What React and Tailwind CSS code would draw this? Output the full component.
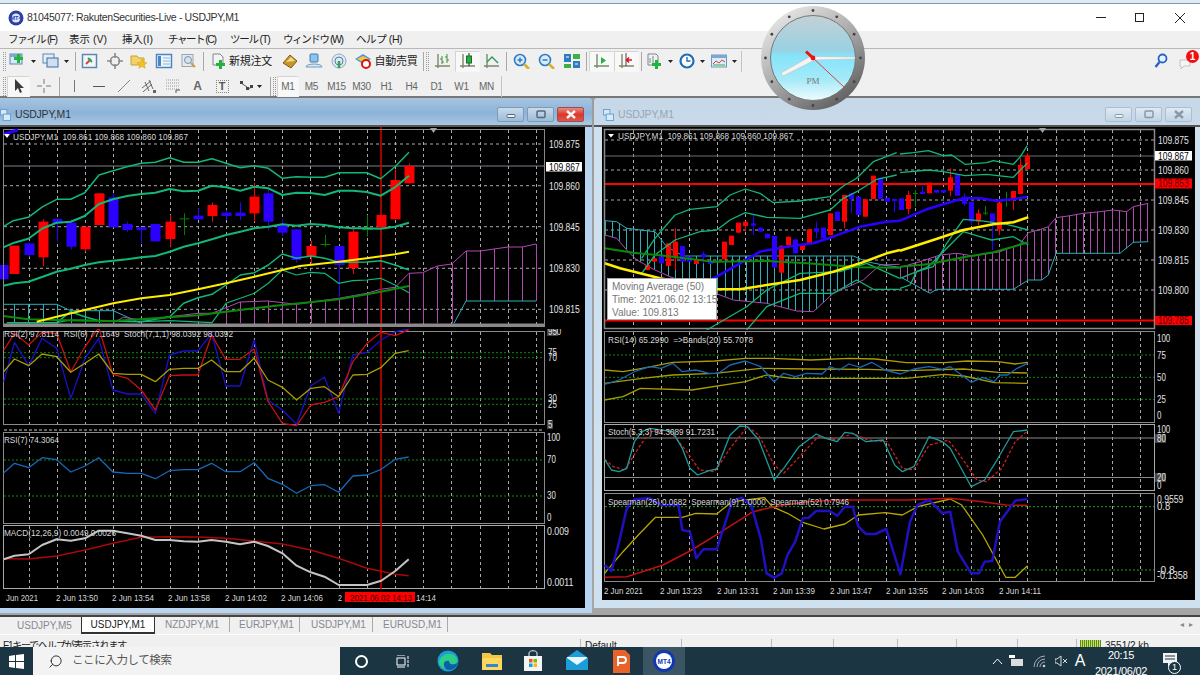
import { Search } from "lucide-react";

const FONT = "font-['Liberation_Sans','Noto_Sans_CJK_JP',sans-serif]";
const axisFont = { fontFamily: "'Liberation Sans', sans-serif", whiteSpace: "pre" };

// zoom-crop coordinates -> screen coordinates
const conv = (ox, oy, sx, sy) => (pts) => pts.map(([x, y]) => `${(ox + x / sx).toFixed(1)},${(oy + y / sy).toFixed(1)}`).join(" ");
const lA = conv(0, 130, 3, 3);
const lS = conv(0, 325, 2.613, 3);
const rA = conv(600, 130, 3, 3);
const rB = conv(900, 130, 3, 3);
const rS = conv(600, 325, 2.613, 3);
// keep 1px verticals on the pixel grid so they stay crisp
const snap = (x) => Math.round(x) + 0.5;

const L = ({ d, c, w = 1.3, dash }) => <polyline points={d} fill="none" stroke={c} strokeWidth={w} strokeDasharray={dash} strokeLinejoin="round" />;
const H = ({ x1, x2, y, c = "#aaa", w = 1, dash = "3 3" }) => <line x1={x1} x2={x2} y1={y} y2={y} stroke={c} strokeWidth={w} strokeDasharray={dash} />;
const T = ({ x, y, c = "#d8d8d8", s = 9.5, len, children }) => (
  <text x={x} y={y} fill={c} fontSize={s} textLength={len} lengthAdjust={len ? "spacingAndGlyphs" : undefined} style={axisFont}>{children}</text>
);
const Tick = ({ x, y, c = "#e4e4e4", t }) => <T x={x} y={y} c={c} s={10} len={t.length * 4.4}>{t}</T>;

function VGrid({ start, end, y1, y2 }) {
  const xs = [];
  for (let x = start; x < end; x += 28.2) xs.push(snap(x));
  return xs.map((x) => <line key={x} x1={x} x2={x} y1={y1} y2={y2} stroke="#a8a8a8" strokeDasharray="3 3" />);
}

function Candle({ x, t, b, w1, w2, c, ox, width }) {
  const fill = c === "r" ? "#ff0000" : c === "b" ? "#2b00ff" : "#008000";
  const cx = snap(ox + x / 3);
  const ty = 130 + t / 3;
  const by = 130 + b / 3;
  return (
    <g>
      <line x1={cx} x2={cx} y1={130 + (w1 ?? t) / 3} y2={130 + (w2 ?? b) / 3} stroke={fill} />
      <rect x={cx - width / 2} y={ty} width={width} height={Math.max(by - ty, 1)} fill={fill} />
    </g>
  );
}

const Slice = ({ box: [x, y, w, h], children }) => (
  <svg className="block shrink-0" width={w} height={h} viewBox={`${x} ${y} ${w} ${h}`}>{children}</svg>
);

const leftCandles = [
  [8,405,448,null,null,"b"],[43,347,432,null,null,"r"],[86,340,375,null,380,"b"],[128,275,382,268,408,"r"],[170,267,280,null,335,"b"],[212,278,350,268,358,"b"],[254,290,358,null,365,"r"],[297,190,285,null,null,"r"],[339,202,292,190,null,"b"],[381,282,300,275,305,"b"],[424,292,300,null,340,"b"],[466,282,334,null,null,"b"],[509,275,327,255,350,"r"],[551,265,268,250,315,"g"],[594,257,268,235,270,"b"],[636,225,258,217,275,"r"],[678,248,258,240,270,"b"],[721,248,258,217,270,"b"],[763,200,250,158,275,"r"],[805,190,275,180,300,"b"],[847,285,308,268,318,"b"],[889,298,390,null,398,"b"],
  [932,348,378,332,400,"r"],[974,342,344,315,350,"g"],[1016,348,405,null,500,"b"],[1058,305,415,298,432,"r"],[1100,297,299,255,320,"g"],[1142,255,292,null,null,"r"],[1185,150,268,118,null,"r"],[1227,108,160,100,null,"r"],
];

const leftLines = {
  bbTop: [[10,290],[40,272],[85,262],[128,230],[170,208],[212,208],[254,188],[297,135],[339,122],[381,110],[424,100],[466,97],[509,83],[551,97],[594,97],[636,86],[678,100],[721,113],[763,107],[805,115],[847,145],[889,140],[932,142],[974,142],[1016,128],[1058,128],[1100,128],[1142,146],[1185,110],[1227,67]],
  bbMid: [[10,352],[43,338],[85,326],[128,295],[170,278],[212,275],[254,258],[297,222],[339,208],[381,198],[424,192],[466,188],[509,177],[551,184],[594,182],[636,167],[678,172],[721,182],[763,170],[805,175],[847,195],[889,188],[932,189],[974,195],[1016,182],[1058,182],[1100,186],[1142,197],[1185,172],[1227,137]],
  bbLow: [[10,467],[43,460],[85,455],[128,440],[170,425],[212,416],[254,405],[297,397],[339,392],[381,388],[424,382],[466,378],[509,365],[551,350],[594,340],[636,328],[678,315],[721,305],[763,295],[805,290],[847,283],[889,287],[932,282],[974,285],[1016,292],[1058,295],[1100,295],[1142,296],[1185,290],[1227,278]],
  g4: [[20,578],[170,578],[212,545],[254,560],[297,572],[424,575],[509,560],[551,520],[594,503],[636,493],[678,465],[721,435],[763,428],[805,405],[847,372],[889,385],[932,378],[974,385],[1016,397],[1058,397],[1100,396],[1142,392],[1185,405],[1227,420]],
  g5: [[30,578],[170,578],[212,570],[254,570],[424,575],[509,572],[636,578],[678,520],[721,505],[763,490],[805,460],[847,420],[889,435],[932,427],[974,430],[1016,460],[1058,452],[1100,450],[1142,445],[1185,465],[1227,488]],
  yellow: [[110,575],[170,560],[254,540],[340,520],[424,505],[509,495],[594,478],[678,460],[763,440],[847,420],[900,408],[1016,395],[1100,385],[1185,373],[1227,365]],
  dark: [[10,558],[85,568],[170,570],[254,572],[340,573],[509,562],[594,556],[678,545],[763,535],[847,525],[900,520],[1016,508],[1142,485],[1227,468]],
  cyan: [[10,523],[170,523],[212,542],[340,542],[390,565],[420,578]],
  purple: [[340,578],[370,562],[424,570],[509,560],[594,550],[636,550],[720,516],[805,513],[889,523],[1016,505],[1100,490],[1142,478],[1185,472],[1227,430],[1268,428],[1312,408],[1355,402],[1398,363],[1440,363],[1482,357],[1524,351],[1566,351],[1608,342]],
  cyanLow: [[1362,580],[1398,513],[1608,513]],
};

const lsRsiBlue = [[10,170],[38,52],[75,122],[110,40],[148,70],[185,220],[222,100],[258,40],[295,195],[333,207],[369,207],[406,265],[443,90],[480,78],[517,78],[553,25],[590,183],[627,183],[664,45],[700,225],[738,255],[775,298],[812,182],[848,157],[885,265],[922,90],[959,82],[996,45],[1033,20],[1068,12]];
const lsRsiRed = [[10,75],[38,25],[75,60],[110,22],[148,25],[185,140],[222,65],[258,8],[295,148],[333,160],[369,195],[406,255],[443,152],[480,150],[517,150],[553,30],[590,103],[627,103],[664,72],[700,228],[738,295],[775,302],[812,240],[848,232],[885,215],[922,110],[959,55],[996,22],[1033,32],[1068,14]];
const lsRsiYellow = [[10,140],[38,102],[75,122],[110,87],[148,95],[185,142],[222,115],[258,87],[295,145],[333,148],[369,148],[406,170],[443,133],[480,130],[517,130],[553,105],[590,140],[627,140],[664,100],[700,165],[738,187],[775,225],[812,190],[848,185],[885,215],[922,150],[959,148],[996,127],[1033,85],[1068,77]];
const lsRsi7 = [[10,443],[38,415],[75,428],[110,398],[148,404],[185,441],[222,423],[258,398],[295,441],[333,445],[369,445],[406,461],[443,437],[480,434],[517,434],[553,415],[590,440],[627,440],[664,413],[700,460],[738,478],[775,505],[812,482],[848,479],[885,502],[922,453],[959,450],[996,433],[1033,403],[1068,396]];
const lsMacd = [[10,703],[38,692],[75,688],[110,660],[148,643],[185,647],[222,640],[258,617],[295,617],[333,625],[369,632],[406,645],[443,645],[480,649],[517,650],[553,645],[590,650],[627,658],[664,650],[700,663],[738,685],[775,722],[812,742],[848,755],[885,780],[922,780],[959,780],[996,767],[1033,738],[1068,703]];
const lsSignal = [[10,701],[75,702],[148,693],[222,675],[295,655],[369,637],[443,635],[517,636],[590,640],[664,648],[738,657],[812,675],[885,700],[959,730],[1033,748],[1068,752]];

const rightCandlesA = [
  [142,405,420,null,null,"r"],[163,385,395,null,null,"r"],[184,380,400,null,null,"b"],[205,340,408,null,null,"r"],[226,335,385,295,420,"r"],[247,348,395,null,null,"b"],[268,380,395,null,null,"b"],[289,390,402,null,null,"r"],[310,372,382,365,400,"b"],[331,395,402,null,null,"b"],[373,335,388,null,null,"r"],[394,317,345,null,null,"r"],[415,278,308,null,null,"r"],[436,275,288,null,305,"r"],[458,280,287,252,315,"b"],[479,293,305,null,null,"b"],[500,311,325,null,null,"b"],[521,318,412,null,null,"b"],[543,347,428,null,null,"r"],[564,320,345,null,null,"r"],[585,328,370,null,null,"b"],[606,342,360,null,null,"r"],[627,298,340,null,null,"r"],[648,295,305,275,325,"b"],[670,293,325,null,null,"b"],[691,250,315,null,null,"r"],[712,245,273,null,null,"b"],[733,195,275,null,295,"r"],[754,190,207,null,250,"b"],[775,200,255,null,null,"b"],[796,208,260,null,null,"r"],[818,137,207,null,null,"r"],[839,143,207,null,null,"b"],[860,203,215,null,null,"b"],[881,207,213,null,247,"b"],
];
const rightCandlesB = [
  [2,205,240,null,null,"b"],[23,195,237,183,252,"r"],[44,189,191,180,230,"g"],[65,185,192,168,null,"b"],[87,158,190,null,null,"r"],[108,180,188,null,null,"b"],[129,180,188,null,null,"b"],[150,142,182,115,198,"r"],[171,133,197,null,null,"b"],[192,200,222,190,228,"b"],[213,215,275,null,285,"b"],[234,250,275,238,285,"r"],[255,248,250,228,255,"g"],[277,250,280,null,360,"b"],[298,218,298,null,315,"r"],[319,210,212,185,230,"g"],[340,183,208,null,240,"r"],[361,105,192,85,null,"r"],[382,77,117,70,null,"r"],
];

const cloudBottomB = [[0,440],[90,490],[110,478],[340,478],[385,450],[425,450],[445,435],[468,370],[660,370],[700,337],[745,335]];
const cloudTopB = [[0,412],[60,395],[120,375],[170,370],[220,378],[300,365],[360,342],[385,308],[425,297],[445,290],[468,263],[510,257],[550,250],[600,245],[640,240],[680,245],[700,230],[745,220]];

const interp = (pts, x) => {
  for (let i = 0; i < pts.length - 1; i++) {
    const [a, b] = [pts[i], pts[i + 1]];
    if (x >= a[0] && x <= b[0]) return a[1] + ((b[1] - a[1]) * (x - a[0])) / (b[0] - a[0]);
  }
  return pts[pts.length - 1][1];
};

function LeftChart() {
  const redLine = (y1, y2) => <line x1="381" x2="381" y1={y1} y2={y2} stroke="#c80000" strokeWidth="1.6" />;
  const purpleBars = [678,721,763,805,847,889,932,974,1016,1058,1100,1142,1185,1227,1268,1312,1355,1398,1440,1482,1524,1566,1608];
  return (
    <div className="flex w-[585px] flex-col bg-black">
      <Slice box={[0, 127, 585, 202]}>
        <VGrid start={28.5} end={544} y1={130} y2={324} />
        {[144, 185.7, 226.7, 268.3, 309.3].map((y) => <H key={y} x1={4} x2={544} y={y} />)}
        <H x1={4} x2={544} y={166} c="#77838f" dash="none" />
        <L d={lA(leftLines.cyan)} c="#2ab0b8" w={1} />
        {[10,43,85,128,170,212,254,297,339].map((x) => {
          const t = interp(leftLines.cyan, x);
          return <line key={x} x1={snap(x / 3)} x2={snap(x / 3)} y1={130 + t / 3} y2="323" stroke="#2ab0b8" />;
        })}
        {purpleBars.map((x) => {
          const t = interp(leftLines.purple, x);
          return <line key={x} x1={snap(x / 3)} x2={snap(x / 3)} y1={130 + t / 3} y2={x >= 1398 ? 301 : 323} stroke="#b048b0" />;
        })}
        <L d={lA(leftLines.purple)} c="#b048b0" w={1} />
        <L d={lA(leftLines.cyanLow)} c="#2ab0b8" w={1} />
        {redLine(127, 329)}
        {leftCandles.map(([x, t, b, w1, w2, c]) => <Candle key={x} x={x} t={t} b={b} w1={w1} w2={w2} c={c} ox={0} width={10} />)}
        <L d={lA(leftLines.g5)} c="#12b676" w={1.2} />
        <L d={lA(leftLines.g4)} c="#12b676" w={1.5} />
        <L d={lA(leftLines.bbTop)} c="#12b676" w={1.5} />
        <L d={lA(leftLines.bbMid)} c="#12b676" w={2} />
        <L d={lA(leftLines.bbLow)} c="#12b676" w={2} />
        <L d={lA(leftLines.dark)} c="#0a8a0a" w={2} />
        <L d={lA(leftLines.yellow)} c="#ffee00" w={2} />
        <rect x="3" y="323.5" width="542" height="3.5" fill="#8a8a8a" />
        <rect x="3.5" y="129.5" width="541" height="197" fill="none" stroke="#888" />
        <polyline points="4,134 18,130" stroke="#2b00ff" strokeWidth="3" fill="none" />
        <polygon points="4,134 10,134 7,138" fill="#fff" />
        <polygon points="430,128 437,128 433.5,133" fill="#9aa4ad" />
        <T x={13} y={140} len={175}>USDJPY,M1  109.861 109.868 109.860 109.867</T>
        {[["109.875", 148], ["109.860", 190], ["109.845", 231], ["109.830", 272], ["109.815", 313]].map(([t, y]) => <Tick key={t} x={549} y={y} t={t} />)}
        <rect x="546" y="162" width="36" height="9.5" fill="#fff" />
        <Tick x={549} y={170.5} c="#000" t="109.867" />
      </Slice>
      <Slice box={[0, 329, 585, 102]}>
        <VGrid start={28.5} end={544} y1={332} y2={424} />
        <rect x="3.5" y="331.5" width="541" height="93" fill="none" stroke="#8a8a8a" />
        {[83, 98, 222, 238].map((Y) => <H key={Y} x1={4} x2={544} y={325 + Y / 3} c="#0a8a0a" dash="2 2" />)}
        {redLine(329, 431)}
        <L d={lS(lsRsiBlue)} c="#1a10c8" />
        <L d={lS(lsRsiRed)} c="#c81010" />
        <L d={lS(lsRsiYellow)} c="#a89c00" />
        <H x1={4} x2={544} y={430} c="#c8c8c8" dash="3 2" />
        <T x={4} y={337} len={229}>RSI(2) 97.8114  RSI(6) 77.1649  Stoch(7,1,1) 98.0392 98.0392</T>
        <rect x="547" y="327" width="11" height="9" fill="#444" />
        <Tick x={548} y={335} t="950" />
        <Tick x={548} y={356} t="75" />
        <Tick x={548} y={361} t="70" />
        <Tick x={548} y={402} t="30" />
        <Tick x={548} y={408} t="25" />
        <rect x="547" y="420" width="6" height="9" fill="#444" />
        <Tick x={548} y={428} t="5" />
      </Slice>
      <Slice box={[0, 431, 585, 93]}>
        <VGrid start={28.5} end={544} y1={433} y2={523} />
        <rect x="3.5" y="432.5" width="541" height="91" fill="none" stroke="#8a8a8a" />
        {[405, 513].map((Y) => <H key={Y} x1={4} x2={544} y={325 + Y / 3} c="#0a8a0a" dash="2 2" />)}
        {redLine(431, 524)}
        <L d={lS(lsRsi7)} c="#1668b8" />
        <T x={4} y={443} len={55}>RSI(7) 74.3064</T>
        <Tick x={547} y={441} t="100" />
        <Tick x={547} y={463} t="70" />
        <Tick x={547} y={499} t="30" />
        <Tick x={547} y={521} t="0" />
      </Slice>
      <Slice box={[0, 524, 585, 65]}>
        <VGrid start={28.5} end={544} y1={526} y2={588} />
        <rect x="3.5" y="525.5" width="541" height="63" fill="none" stroke="#aaa" />
        {redLine(524, 589)}
        <L d={lS(lsSignal)} c="#a80808" w={1.5} />
        <L d={lS(lsMacd)} c="#c4c4c4" w={2} />
        <T x={4} y={536} len={112}>MACD(12,26,9) 0.0049 0.0026</T>
        <Tick x={547} y={535} t="0.009" />
        <Tick x={547} y={586} t="0.0011" />
      </Slice>
      <Slice box={[0, 589, 585, 19]}>
        {[["Jun 2021", 6, 32], ["2 Jun 13:50", 56, 42], ["2 Jun 13:54", 112, 42], ["2 Jun 13:58", 168, 42], ["2 Jun 14:02", 225, 42], ["2 Jun 14:06", 281, 42], ["2", 338, 4], ["14:14", 416, 20]].map(([t, x, len]) => <T key={x} x={x} y={601} len={len}>{t}</T>)}
        <rect x="345" y="592" width="70" height="10" fill="#ff0000" />
        <T x={350} y={601} c="#330000" len={62}>2021.06.02 14:13</T>
      </Slice>
    </div>
  );
}

function RightChart() {
  const barsB = [];
  for (let x = 0; x <= 745; x += 21.15) barsB.push(x);
  const barsA = [];
  for (let x = 14; x <= 780; x += 21.15) barsA.push(x);
  const cloudTop = [[14,272],[50,275],[80,295],[165,305],[200,350],[250,378],[760,378],[800,395],[850,405],[899,412]];
  const cloudBot = [[14,315],[50,325],[80,360],[110,390],[165,420],[210,440],[320,480],[400,510],[500,520],[590,543],[640,545],[700,490],[790,450],[840,405],[899,403]];
  return (
    <div className="relative flex w-[593px] flex-col bg-black">
      <Slice box={[602, 127, 593, 203]}>
        <VGrid start={632.5} end={1154} y1={130} y2={328} />
        {[140, 170, 200, 230, 260, 290].map((y) => <H key={y} x1={605} x2={1154} y={y} />)}
        <H x1={605} x2={1154} y={156} c="#6a6f74" dash="none" />
        <L d={rA(cloudTop)} c="#2ab0b8" w={1} />
        <L d={rA(cloudBot)} c="#b048b0" w={1} />
        {barsA.map((x) => <line key={x} x1={snap(600 + x / 3)} x2={snap(600 + x / 3)} y1={130 + interp(cloudTop, x) / 3} y2={130 + interp(cloudBot, x) / 3} stroke="#2ab0b8" />)}
        {barsB.map((x) => <line key={x} x1={snap(900 + x / 3)} x2={snap(900 + x / 3)} y1={130 + interp(cloudTopB, x) / 3} y2={130 + interp(cloudBottomB, x) / 3} stroke="#b048b0" />)}
        <L d={rB(cloudTopB)} c="#b048b0" w={1} />
        <L d={rB(cloudBottomB)} c="#2ab0b8" w={1} />
        <H x1={605} x2={1154} y={184} c="#ff0000" w={2} dash="none" />
        <H x1={605} x2={1154} y={320.5} c="#ff0000" w={2} dash="none" />
        {rightCandlesA.map(([x, t, b, w1, w2, c]) => <Candle key={x} x={x} t={t} b={b} w1={w1} w2={w2} c={c} ox={600} width={5} />)}
        {rightCandlesB.map(([x, t, b, w1, w2, c]) => <Candle key={x} x={x} t={t} b={b} w1={w1} w2={w2} c={c} ox={900} width={5} />)}
        <L d={rA([[125,385],[165,325],[225,255],[270,238],[350,230],[390,195],[436,177],[480,190],[520,218],[600,213],[690,200],[730,168],[770,145],[820,95],[890,68]])} c="#12b676" />
        <L d={rB([[0,72],[40,68],[85,62],[130,77],[155,75],[195,103],[260,98],[280,92],[340,103],[361,80],[382,47]])} c="#12b676" />
        <L d={rA([[125,430],[165,375],[205,345],[225,330],[300,305],[350,300],[390,270],[436,248],[500,262],[600,265],[690,240],[730,205],[770,185],[830,148],[890,135]])} c="#12b676" />
        <L d={rB([[0,128],[85,120],[130,125],[195,137],[260,133],[340,142],[361,120],[382,100]])} c="#12b676" />
        <L d={rA([[320,600],[440,530],[500,480],[600,430],[720,425],[800,400],[899,445]])} c="#12b676" />
        <L d={rA([[440,600],[500,530],[600,490],[700,490],[770,450],[820,478],[899,478]])} c="#12b676" />
        <L d={rB([[0,475],[30,465],[50,425],[100,410],[140,340],[190,268],[240,272],[320,283],[385,300]])} c="#12b676" />
        <L d={rB([[0,445],[50,425],[85,410],[130,365],[190,305],[240,320],[275,330],[340,320],[385,345]])} c="#12b676" />
        <L d={rA([[330,450],[350,440],[420,400],[480,365],[560,350],[640,340],[700,320],[780,290],[860,275],[900,272]])} c="#2b00ff" w={2.5} />
        <L d={rB([[0,272],[80,238],[140,220],[190,205],[240,205],[290,212],[340,208],[382,200]])} c="#2b00ff" w={2.5} />
        <L d={rA([[14,355],[100,368],[200,378],[340,395],[500,393],[620,400],[780,412],[900,413]])} c="#0a8a0a" w={2} />
        <L d={rB([[0,410],[90,402],[190,382],[280,367],[340,350],[385,337]])} c="#0a8a0a" w={2} />
        <L d={rA([[14,400],[60,415],[120,430],[180,445],[350,478],[420,478],[500,465],[600,450],[700,425],[780,400],[860,370],[900,360]])} c="#ffee00" w={2.5} />
        <L d={rB([[0,362],[100,330],[190,300],[280,283],[340,277],[385,262]])} c="#ffee00" w={2.5} />
        <rect x="604.5" y="129.5" width="550" height="199" fill="none" stroke="#8a8a8a" strokeWidth="1.5" />
        <polygon points="608,134 614,134 611,137.5" fill="#fff" />
        <polygon points="1039,128 1046,128 1042.5,133" fill="#9aa4ad" />
        <T x={618} y={139} len={175}>USDJPY,M1  109.861 109.868 109.860 109.867</T>
        {[["109.875", 144], ["109.860", 174], ["109.845", 204], ["109.830", 234], ["109.815", 264], ["109.800", 294]].map(([t, y]) => <Tick key={t} x={1158} y={y} t={t} />)}
        <rect x="1155" y="151" width="37" height="9.5" fill="#fff" />
        <Tick x={1158} y={159.5} c="#000" t="109.867" />
        <rect x="1155" y="178.5" width="37" height="10" fill="#ff0000" />
        <Tick x={1158} y={187} c="#5a0000" t="109.853" />
        <rect x="1155" y="316" width="37" height="9" fill="#ff0000" />
        <Tick x={1158} y={324} c="#5a0000" t="109.785" />
      </Slice>
      <Slice box={[602, 330, 593, 93]}>
        <VGrid start={632.5} end={1154} y1={332} y2={422} />
        <rect x="604.5" y="331.5" width="550" height="91" fill="none" stroke="#8a8a8a" />
        {[90, 157, 223].map((Y) => <H key={Y} x1={605} x2={1154} y={325 + Y / 3} c="#0a8a0a" dash="2 2" />)}
        <L d={rS([[12,135],[60,140],[110,130],[190,112],[300,108],[380,100],[450,100],[550,105],[650,100],[720,102],[800,113],[900,113],[960,108],[1040,110],[1085,117],[1117,112]])} c="#a89c00" />
        <L d={rS([[12,175],[110,160],[190,150],[300,145],[420,130],[550,132],[700,133],[800,137],[950,132],[1040,142],[1117,144]])} c="#a89c00" />
        <L d={rS([[12,225],[60,215],[105,190],[240,195],[380,170],[435,150],[500,160],[800,160],[900,148],[950,153],[1030,173],[1117,175]])} c="#a89c00" />
        <L d={rS([[12,178],[50,165],[90,140],[130,125],[160,130],[190,115],[215,140],[250,135],[285,145],[310,145],[340,120],[380,108],[420,125],[455,170],[480,145],[510,155],[540,145],[580,147],[600,125],[625,135],[650,117],[680,127],[710,112],[745,135],[785,147],[820,132],[860,125],[895,133],[915,125],[945,150],[970,172],[1000,157],[1030,170],[1045,150],[1065,150],[1090,130],[1117,115]])} c="#1668b8" />
        <T x={608} y={343} len={145}>RSI(14) 65.2990  =&gt;Bands(20) 55.7078</T>
        {[["100", 342], ["75", 359], ["50", 381], ["25", 403], ["0", 419]].map(([t, y]) => <Tick key={t} x={1157} y={y} t={t} />)}
      </Slice>
      <Slice box={[602, 423, 593, 69]}>
        <VGrid start={632.5} end={1154} y1={425} y2={491} />
        <rect x="604.5" y="424.5" width="550" height="66" fill="none" stroke="#aaa" />
        <H x1={605} x2={1154} y={438} c="#8a8a8a" dash="none" />
        <H x1={605} x2={1154} y={477.5} c="#8a8a8a" dash="none" />
        <L d={rS([[12,403],[35,425],[65,435],[100,370],[130,320],[180,315],[220,370],[260,435],[300,440],[340,370],[385,305],[415,330],[455,420],[480,445],[530,385],[570,335],[620,345],[660,325],[700,345],[750,350],[790,430],[820,435],[860,360],[910,345],[940,390],[985,465],[1010,470],[1050,430],[1085,350],[1117,318]])} c="#d02020" dash="3 2" />
        <L d={rS([[12,403],[30,435],[50,440],[70,430],[90,350],[110,320],[130,310],[190,320],[215,370],[235,430],[255,450],[285,437],[305,432],[340,330],[365,303],[385,305],[415,345],[440,420],[455,465],[480,430],[520,365],[565,327],[590,340],[620,350],[640,322],[660,325],[695,350],[740,345],[770,420],[790,440],[820,425],[860,335],[895,350],[915,370],[970,485],[1005,465],[1040,400],[1080,320],[1117,315]])} c="#1f9a9a" />
        <T x={608} y={435} len={107}>Stoch(5,3,3) 94.3089 91.7231</T>
        <Tick x={1157} y={433} t="100" />
        <rect x="1155" y="434" width="11" height="9" fill="#444" />
        <Tick x={1157} y={442} t="80" />
        <rect x="1155" y="473" width="11" height="9" fill="#444" />
        <Tick x={1157} y={481} t="20" />
        <Tick x={1157} y={489} t="0" />
      </Slice>
      <Slice box={[602, 492, 593, 92]}>
        <VGrid start={632.5} end={1154} y1={494} y2={582} />
        <rect x="604.5" y="493.5" width="550" height="88" fill="none" stroke="#8a8a8a" />
        {[545, 735].map((Y) => <H key={Y} x1={605} x2={1154} y={325 + Y / 3} c="#18a018" dash="2 2" />)}
        <L d={rS([[12,745],[60,680],[100,630],[145,577],[215,577],[250,565],[305,567],[345,530],[430,518],[450,545],[490,565],[530,592],[585,612],[640,597],[675,570],[745,563],[790,570],[830,545],[915,522],[945,540],[1000,630],[1060,757],[1085,757],[1117,722]])} c="#b8a800" />
        <L d={rS([[12,757],[70,755],[110,740],[165,720],[240,675],[310,625],[400,560],[455,545],[540,530],[620,525],[800,525],[915,520],[1000,530],[1060,540],[1117,541]])} c="#c01010" w={1.5} />
        <L d={rS([[12,720],[30,738],[50,650],[70,550],[90,523],[130,520],[160,540],[205,540],[215,615],[235,620],[252,700],[270,673],[305,673],[345,530],[370,518],[395,540],[420,640],[435,745],[455,758],[475,745],[490,690],[510,650],[530,580],[545,578],[565,558],[600,558],[620,572],[640,545],[660,545],[675,605],[695,627],[720,627],[748,612],[785,748],[810,590],[830,540],[860,525],[895,565],[915,560],[935,680],[970,745],[990,745],[1005,710],[1025,708],[1045,590],[1085,527],[1117,522]])} c="#2010c0" w={2.5} />
        <T x={608} y={505} len={241}>Spearman(26) 0.0682  Spearman(9) 1.0000  Spearman(52) 0.7946</T>
        <Tick x={1157} y={503} t="0.9559" />
        <Tick x={1157} y={510} t="0.8" />
        <Tick x={1157} y={574} t="-0.8" />
        <Tick x={1157} y={579} t="-0.1358" />
      </Slice>
      <Slice box={[602, 584, 593, 16]}>
        {[["2 Jun 2021", 604, 39], ["2 Jun 13:23", 660, 42], ["2 Jun 13:31", 717, 42], ["2 Jun 13:39", 773, 42], ["2 Jun 13:47", 830, 42], ["2 Jun 13:55", 886, 42], ["2 Jun 14:03", 942, 42], ["2 Jun 14:11", 999, 42]].map(([t, x, len]) => <T key={x} x={x} y={594} len={len}>{t}</T>)}
      </Slice>
      <div className="absolute left-[5px] top-[151px] flex h-[42px] w-[110px] flex-col justify-center whitespace-nowrap border border-[#aaa] bg-white pl-1 text-[10px] leading-[13px] text-[#777]">
        <span>Moving Average (50)</span>
        <span>Time: 2021.06.02 13:15</span>
        <span>Value: 109.813</span>
      </div>
    </div>
  );
}

function WinBtn({ kind, danger, dim }) {
  const tone = danger
    ? "border-[#a04a50] bg-[linear-gradient(#e58c80,#e0352a_50%,#d8584c)]"
    : dim
      ? "border-[#a8bed2] bg-[linear-gradient(#dfe9f2,#c2d5e6)]"
      : "border-[#7d9ab6] bg-[linear-gradient(#c9dbeb,#9dbbd8)]";
  const ic = danger ? "#f4f4f4" : dim ? "#8898a8" : "#55677a";
  return (
    <div className={`flex h-[15px] w-[27px] items-center justify-center rounded-[2px] border ${tone}`}>
      <svg width="12" height="9" viewBox="0 0 12 9">
        {kind === "min" && <rect x="2" y="4.5" width="8" height="3" rx="1" fill="#eef3f8" stroke={ic} />}
        {kind === "max" && <rect x="2" y="1" width="8" height="6.5" rx="1" fill="none" stroke={ic} strokeWidth="1.5" />}
        {kind === "close" && <path d="M2 1l8 7M10 1L2 8" stroke={ic} strokeWidth="2.4" />}
      </svg>
    </div>
  );
}

function ChildTitle({ active }) {
  return (
    <div className={`flex h-[29px] shrink-0 items-center justify-between border-b-2 border-[#555] pr-[8px] pt-[6px] ${active ? "bg-[linear-gradient(#a6c4e0,#8db3d8_55%,#a9c7e2)]" : "bg-[linear-gradient(#c6d8e7,#c8dae9)] pl-[9px]"}`}>
      <div className="flex items-center gap-[4px]">
        <svg width="11" height="12" viewBox="0 0 12 13">
          <rect x="0.5" y="0.5" width="7" height="6" fill="#dbe9f6" stroke="#5d9fd6" />
          <rect x="3.5" y="5.5" width="8" height="7" fill="#dbe9f6" stroke="#5d9fd6" />
        </svg>
        <span className={`text-[10.5px] tracking-[-0.2px] ${active ? "text-[#333]" : "text-[#97a6b3]"}`}>USDJPY,M1</span>
      </div>
      <div className="flex gap-[3px]">
        <WinBtn kind="min" dim={!active} />
        <WinBtn kind="max" dim={!active} />
        <WinBtn kind="close" danger={active} dim={!active} />
      </div>
    </div>
  );
}

// ---- toolbar icons ----
const Ico = ({ children, w = 18 }) => <svg width={w} height="16" viewBox={`0 0 ${w} 16`} className="shrink-0">{children}</svg>;
const Plus = ({ x = 8, y = 7 }) => <path d={`M${x + 3} ${y}h3v3h3v3h-3v3h-3v-3h-3v-3h3z`} fill="#22b33a" />;
const Drop = () => <svg width="5" height="3" viewBox="0 0 5 3" className="ml-[4px] shrink-0"><path d="M0 0h5L2.5 3z" fill="#222" /></svg>;
const Axes = ({ children }) => (
  <Ico>
    <path d="M4 1v12M1 13h15M4 13v2" stroke="#7a8a6a" strokeWidth="1.4" fill="none" />
    {children}
  </Ico>
);

const icons = {
  newChart: <Ico><rect x="1" y="1" width="12" height="10" fill="#d8e8f8" stroke="#5b87b5" /><rect x="1" y="1" width="12" height="3" fill="#7fa8d0" /><Plus x={5} y={1} /></Ico>,
  profiles: <Ico><rect x="1" y="1" width="11" height="9" fill="#e4eef8" stroke="#5b87b5" /><rect x="5" y="5" width="11" height="9" fill="#cfe0f2" stroke="#3d6d9e" /></Ico>,
  nav: <Ico><rect x="1.5" y="1.5" width="14" height="13" fill="#f2f6fb" stroke="#5b87b5" strokeWidth="1.5" /><path d="M5 11l5-5" stroke="#d8443a" strokeWidth="2" /><path d="M7 5l4 4" stroke="#2fa84f" strokeWidth="2" /></Ico>,
  cross: <Ico><circle cx="9" cy="8" r="4.5" fill="none" stroke="#8a8a8a" strokeWidth="1.6" /><path d="M9 0v5M9 11v5M1 8h5M12 8h5" stroke="#8a8a8a" strokeWidth="1.6" /></Ico>,
  folder: <Ico><path d="M1 3h6l2 2h5v7H1z" fill="#f2d36b" stroke="#c9a030" /><path d="M12 6l1.5 3.4 3.5.3-2.7 2.2.9 3.4-3.2-1.9-3.2 1.9.9-3.4L7 9.7l3.5-.3z" fill="#f5c21c" stroke="#c9a030" strokeWidth=".5" /></Ico>,
  term: <Ico><rect x="1.5" y="1.5" width="15" height="13" fill="#eef5fc" stroke="#4a86c0" strokeWidth="1.5" /><rect x="3" y="3" width="3" height="10" fill="#4a86c0" /><path d="M8 5h7M8 8h7M8 11h7" stroke="#8fb4d8" /></Ico>,
  test: <Ico><rect x="2" y="1.5" width="11" height="12" fill="#e6e9ed" stroke="#9aa5b0" /><circle cx="8" cy="7" r="3.5" fill="#cfe4f4" stroke="#7d93a8" /><path d="M11 10l4 4" stroke="#c8a040" strokeWidth="2" /></Ico>,
  order: <Ico><path d="M3 1h7l3 3v8H3z" fill="#f4f4f4" stroke="#7e8790" /><Plus x={6} y={7} /></Ico>,
  book: <Ico><path d="M2 10l7-8 7 6-6 7z" fill="#c89428" stroke="#7f5d14" /><path d="M5 9l5-5 4 4" fill="#f0d88c" /></Ico>,
  person: <Ico><rect x="5" y="1" width="8" height="8" rx="1" fill="#8ec3ec" stroke="#3d7db5" /><path d="M1 14c0-4 16-4 16 0z" fill="#dce9f5" stroke="#6f9bc2" /></Ico>,
  signal: <Ico><circle cx="9" cy="8" r="7" fill="#e2e8ee" stroke="#9aa7b4" /><circle cx="9" cy="8" r="4" fill="none" stroke="#3d86c0" /><path d="M9 8v7" stroke="#2fa84f" strokeWidth="2.5" /></Ico>,
  auto: <Ico><path d="M1 6l8-5 8 5-8 5z" fill="#4a9ad8" /><path d="M3 6l6-3 6 3-6 3z" fill="#f2c83c" /><circle cx="12" cy="11" r="4" fill="#fff" stroke="#e01010" strokeWidth="2" /></Ico>,
  bars: <Axes><path d="M8 3v8M6 6h2M8 9h2M13 1v9M11 4h2M13 7h2" stroke="#3f8f3f" /></Axes>,
  candle: <Axes><path d="M10 0v13" stroke="#222" /><rect x="7.5" y="3" width="5" height="7" fill="#22b33a" stroke="#1a6a2a" /></Axes>,
  line: <Axes><path d="M4 9l5-5 6 6" stroke="#2f9a4f" strokeWidth="1.4" fill="none" /></Axes>,
  zoomIn: <Ico><circle cx="7" cy="7" r="5.5" fill="#d9ecfa" stroke="#2e7cc0" strokeWidth="1.6" /><path d="M4.5 7h5M7 4.5v5" stroke="#2e7cc0" strokeWidth="1.5" /><path d="M11 11l5 5" stroke="#d8b030" strokeWidth="2.6" /></Ico>,
  zoomOut: <Ico><circle cx="7" cy="7" r="5.5" fill="#d9ecfa" stroke="#2e7cc0" strokeWidth="1.6" /><path d="M4.5 7h5" stroke="#2e7cc0" strokeWidth="1.5" /><path d="M11 11l5 5" stroke="#d8b030" strokeWidth="2.6" /></Ico>,
  tile: <Ico><rect x="1" y="1" width="7" height="8" fill="#2e7cc0" /><rect x="10" y="1" width="7" height="5" fill="#3cb043" /><rect x="1" y="11" width="7" height="4" fill="#3cb043" /><rect x="10" y="8" width="7" height="7" fill="#2e7cc0" /><path d="M3 4h3M12 11h3" stroke="#fff" /></Ico>,
  shift: <Axes><path d="M8 4v7l5-3.5z" fill="#22b33a" /></Axes>,
  scroll: <Axes><path d="M8 0v13" stroke="#444" /><path d="M14 7h-5M11 4.5L8.5 7l2.5 2.5" stroke="#e01010" strokeWidth="1.5" fill="none" /></Axes>,
  indicator: <Ico><path d="M2 1h8l2 2v9H2z" fill="#eef0f2" stroke="#7e8790" /><path d="M4 5v5M7 3v7" stroke="#7e8790" /><Plus x={6} y={7} /></Ico>,
  clock: <Ico><circle cx="9" cy="8" r="6.5" fill="#fff" stroke="#1f6eb5" strokeWidth="2.2" /><path d="M9 4v4h3.5" stroke="#1f6eb5" strokeWidth="1.4" fill="none" /></Ico>,
  tpl: <Ico><rect x="1.5" y="2" width="15" height="12" fill="#dcebf8" stroke="#6a9ac4" /><rect x="1.5" y="2" width="15" height="3" fill="#7fa8d0" /><path d="M3 11l3-3 3 2 3-3 3 2" stroke="#d8443a" fill="none" /><path d="M3 12h12" stroke="#3cb043" /></Ico>,
};

const Sep = () => <div className="mx-[2px] h-[19px] w-px shrink-0 bg-[#a8a8a8]" />;
const Grip = () => <div className="ml-[3px] mr-[1px] h-[19px] w-[3px] shrink-0 border-x border-dotted border-[#999]" />;
const GripTight = () => <div className="mr-[1px] h-[19px] w-[3px] shrink-0 border-x border-dotted border-[#999]" />;

function Btn({ w = "w-[25px]", active, drop, children }) {
  return (
    <div className={`flex h-[21px] shrink-0 items-center justify-center ${w} ${active ? "border border-[#d4d4d4] border-b-[#f6f6f6] border-r-[#f6f6f6] bg-[#f8f8f8]" : ""}`}>
      {children}
      {drop && <Drop />}
    </div>
  );
}

function ToolbarOne() {
  return (
    <div className="flex h-[24px] shrink-0 items-center">
      <Grip />
      <Btn w="w-[31px]" drop>{icons.newChart}</Btn>
      <Btn w="w-[35px]" drop>{icons.profiles}</Btn>
      <Sep />
      <Btn w="w-[24px]">{icons.nav}</Btn>
      <Btn>{icons.cross}</Btn>
      <Btn w="w-[24px]">{icons.folder}</Btn>
      <Btn>{icons.term}</Btn>
      <Btn>{icons.test}</Btn>
      <Sep />
      <Btn w="w-[70px]"><span className="flex items-center gap-[1px]">{icons.order}<span className="text-[11px] tracking-[-0.2px] text-[#222]">新規注文</span></span></Btn>
      <div className="w-[2px] shrink-0" />
      <Btn w="w-[24px]">{icons.book}</Btn>
      <Btn w="w-[24px]">{icons.person}</Btn>
      <Btn>{icons.signal}</Btn>
      <Btn w="w-[70px]"><span className="flex items-center gap-[2px]">{icons.auto}<span className="text-[11px] tracking-[-0.2px] text-[#222]">自動売買</span></span></Btn>
      <Sep />
      <GripTight />
      <Btn>{icons.bars}</Btn>
      <Btn active>{icons.candle}</Btn>
      <Btn w="w-[24px]">{icons.line}</Btn>
      <Sep />
      <Btn>{icons.zoomIn}</Btn>
      <Btn>{icons.zoomOut}</Btn>
      <Btn>{icons.tile}</Btn>
      <Sep />
      <Btn active>{icons.shift}</Btn>
      <Btn active>{icons.scroll}</Btn>
      <Sep />
      <Btn w="w-[31px]" drop>{icons.indicator}</Btn>
      <Btn w="w-[32px]" drop>{icons.clock}</Btn>
      <Btn w="w-[33px]" drop>{icons.tpl}</Btn>
      <div className="ml-[1px] h-[21px] w-px bg-[#c4c4c4]" />
      <div className="flex-1" />
      <svg width="14" height="16" viewBox="0 0 14 16" className="mr-[11px]">
        <circle cx="8.5" cy="5.5" r="4" fill="#eaf2fb" stroke="#2b63c4" strokeWidth="1.8" />
        <path d="M5.5 9l-4 5" stroke="#2b63c4" strokeWidth="2.4" />
      </svg>
      <div className="relative mr-[1px] h-[18px] w-[20px]">
        <svg width="14" height="12" viewBox="0 0 14 12" className="absolute bottom-0 left-0"><path d="M1 2h10v6H5l-3 3V8H1z" fill="#f5f5f5" stroke="#c4c4c4" /></svg>
        <span className="absolute -top-[2px] right-0 flex h-[13px] w-[13px] items-center justify-center rounded-full bg-[#f01010] text-[10px] font-bold leading-none text-white">1</span>
      </div>
    </div>
  );
}

function ToolbarTwo() {
  const tf = ["M1", "M5", "M15", "M30", "H1", "H4", "D1", "W1", "MN"];
  return (
    <div className="flex h-[23px] shrink-0 items-center pt-[3px]">
      <Grip />
      <Btn w="w-[23px]" active><svg width="10" height="14" viewBox="0 0 10 14"><path d="M1 0v12l3-3 2 5 2-1-2-4h4z" fill="#3a3a3a" /></svg></Btn>
      <Btn w="w-[27px]"><svg width="14" height="14" viewBox="0 0 14 14"><path d="M7 0v5M7 9v5M0 7h5M9 7h5" stroke="#777" /></svg></Btn>
      <Sep />
      <Btn w="w-[24px]"><svg width="3" height="12" viewBox="0 0 3 12"><path d="M1.5 0v12" stroke="#777" /></svg></Btn>
      <Btn><svg width="12" height="3" viewBox="0 0 12 3"><path d="M0 1.5h12" stroke="#555" /></svg></Btn>
      <Btn><svg width="12" height="12" viewBox="0 0 12 12"><path d="M0 12L12 0" stroke="#8a8a8a" /></svg></Btn>
      <Btn><svg width="15" height="15" viewBox="0 0 15 15"><path d="M1 9l9-7M2 13l9-8M4 3l4 9M8 1l4 9" stroke="#6a6a6a" fill="none" /><rect x="12" y="11" width="3" height="3" fill="#666" /></svg></Btn>
      <Btn w="w-[24px]"><svg width="15" height="14" viewBox="0 0 15 14"><path d="M0 1h13M0 4h13M0 7h13M0 10h13" stroke="#999" strokeDasharray="1 1" /><path d="M10 11h4M10 11v3" stroke="#555" /></svg></Btn>
      <Btn><span className="text-[12px] font-bold text-[#666]">A</span></Btn>
      <Btn w="w-[24px]"><span className="flex h-[13px] w-[13px] items-center justify-center border border-dotted border-[#888] text-[11px] font-bold leading-none text-[#555]">T</span></Btn>
      <Btn w="w-[34px]" drop><svg width="13" height="12" viewBox="0 0 13 12"><path d="M1 3l6 4M8 9l4-2" stroke="#555" /><rect x="0" y="1" width="3" height="3" fill="#444" /><rect x="6" y="7" width="3" height="3" fill="#444" /><rect x="10" y="5" width="3" height="3" fill="#444" /></svg></Btn>
      <Sep />
      <GripTight />
      {tf.map((t, i) => (
        <Btn key={t} w={i === 0 ? "w-[22px]" : "w-[25px]"} active={i === 0}>
          <span className="text-[10px] tracking-[-0.3px] text-[#666]">{t}</span>
        </Btn>
      ))}
      <div className="ml-[2px] h-[21px] w-px bg-[#c4c4c4]" />
    </div>
  );
}

function Clock() {
  const dots = Array.from({ length: 12 }, (_, i) => (i * Math.PI) / 6);
  return (
    <svg className="absolute left-[761px] top-[6px]" width="106" height="106" viewBox="0 0 106 106">
      <defs>
        <linearGradient id="ring" x1="0.15" y1="0" x2="0.85" y2="1">
          <stop offset="0" stopColor="#eeeeee" />
          <stop offset="0.5" stopColor="#a8a8a8" />
          <stop offset="1" stopColor="#555555" />
        </linearGradient>
        <linearGradient id="face" x1="0" y1="0" x2="0" y2="1">
          <stop offset="0" stopColor="#c4d0d6" />
          <stop offset="0.42" stopColor="#97d2e2" />
          <stop offset="0.47" stopColor="#85e4fa" />
          <stop offset="0.75" stopColor="#a4eaf8" />
          <stop offset="1" stopColor="#f0fbfe" />
        </linearGradient>
      </defs>
      <circle cx="52" cy="52" r="52" fill="url(#ring)" />
      <circle cx="52" cy="52" r="42.5" fill="url(#face)" stroke="#777" />
      {dots.map((a) => <circle key={a} cx={52 + 47.5 * Math.cos(a)} cy={52 + 47.5 * Math.sin(a)} r="1.4" fill="#444" />)}
      <text x="52" y="78" textAnchor="middle" fontSize="9" fill="#777" style={{ fontFamily: "'Liberation Serif', serif" }}>PM</text>
      <path d="M52 50.5L94 51v2L52 54z" fill="#f4f4f4" stroke="#bbb" strokeWidth=".5" />
      <path d="M50 50L20 67l2 3 32-16z" fill="#f4f4f4" stroke="#bbb" strokeWidth=".5" />
      <path d="M45 45.5L52 52" stroke="#ee1111" strokeWidth="3" />
      <path d="M52 52L84 82" stroke="#d84040" />
      <circle cx="52" cy="52" r="2.4" fill="#ee1111" />
    </svg>
  );
}

function Tabs() {
  const inactive = "text-[#858a90]";
  return (
    <div className="flex h-[19px] shrink-0 items-start border-t-2 border-[#444] bg-[#f0f0f0] text-[10px]">
      <div className={`flex h-[16px] w-[81px] items-center pl-[17px] ${inactive}`}>USDJPY,M5</div>
      <div className="flex h-[17px] w-[74px] items-center justify-center border-x border-b-2 border-[#333] bg-white text-[#222]">USDJPY,M1</div>
      <div className={`flex h-[15px] w-[75px] items-center border-r border-[#aaa] pl-[10px] ${inactive}`}>NZDJPY,M1</div>
      <div className={`flex h-[15px] w-[70px] items-center border-r border-[#aaa] pl-[9px] ${inactive}`}>EURJPY,M1</div>
      <div className={`flex h-[15px] w-[73px] items-center border-r border-[#aaa] pl-[11px] ${inactive}`}>USDJPY,M1</div>
      <div className={`flex h-[15px] w-[75px] items-center border-r border-[#aaa] pl-[10px] ${inactive}`}>EURUSD,M1</div>
      <div className="flex-1" />
      <div className="mr-[7px] mt-[3px] flex gap-[5px] text-[8px] leading-[10px] text-[#888]"><span>◂</span><span>▸</span></div>
    </div>
  );
}

function StatusBar() {
  const cells = ["w-[90px]", "w-[62px]", "w-[64px]", "w-[59px]", "w-[61px]", "w-[59px]"];
  return (
    <div className="flex h-[13px] shrink-0 overflow-hidden border-t border-white bg-[#f0f0f0] pt-[4px] text-[10px] leading-[13px] text-[#222]">
      <div className="w-[580px] pl-[3px] tracking-[-1.2px]">F1キーでヘルプが表示されます</div>
      <div className="w-[101px] border-l border-[#bbb] pl-[4px]">Default</div>
      {cells.map((w, i) => <div key={i} className={`${w} border-l border-[#bbb]`} />)}
      <div className="flex border-l border-[#bbb] pl-[3px]">
        <div className="mt-[1px] mr-[4px] h-[10px] w-[21px] bg-[repeating-linear-gradient(90deg,#5a8a20,#5a8a20_1px,#c8e060_1px,#c8e060_2px)]" />
        <span>3551/2 kb</span>
      </div>
    </div>
  );
}

function Taskbar() {
  return (
    <div className="flex h-[28px] shrink-0 items-center bg-[#1b3542] text-white">
      <div className="flex w-[33px] justify-center">
        <svg width="15" height="15" viewBox="0 0 15 15"><path d="M0 2l6-1v6H0zM7 1l8-1v7H7zM0 8h6v6l-6-1zM7 8h8v7l-8-1z" fill="#fff" /></svg>
      </div>
      <div className="flex h-full w-[307px] items-center gap-[9px] bg-[#f3f3f3] pl-[15px] text-[#555]">
        <Search size={15} strokeWidth={1.6} className="-scale-x-100 text-[#333]" />
        <span className="text-[11.5px] tracking-[-0.4px]">ここに入力して検索</span>
      </div>
      <div className="flex w-[42px] justify-center"><div className="h-[13px] w-[13px] rounded-full border-2 border-white" /></div>
      <div className="flex w-[42px] justify-center">
        <svg width="14" height="13" viewBox="0 0 14 13"><rect x="1" y="3" width="8" height="7" fill="none" stroke="#fff" /><path d="M1 0h8M1 12h8M12 1v3M12 5v3M12 9v3" stroke="#fff" /></svg>
      </div>
      <div className="flex w-[48px] justify-center">
        <svg width="22" height="22" viewBox="0 0 22 22"><circle cx="11" cy="11" r="10.5" fill="#1b9ed8" /><path d="M2 12C3 5 13 1 18 6c3 3 3 7 0 8-3 1-7 0-6-3-5-1-7 4-3 8-4-1-7-4-7-7z" fill="#2dcf85" /><path d="M9 19c-4-4-2-9 3-8 0 3 3 4 6 3 1 0 3-1 3-3 0 6-6 11-12 8z" fill="#0b5fa8" /></svg>
      </div>
      <div className="flex w-[40px] justify-center">
        <svg width="22" height="20" viewBox="0 0 22 20"><path d="M1 2h8l2 2h10v15H1z" fill="#f2c744" /><rect x="1" y="7" width="20" height="12" fill="#ffd75e" /><rect x="5" y="13" width="12" height="3" fill="#2b8bd0" /></svg>
      </div>
      <div className="flex w-[42px] justify-center">
        <svg width="20" height="22" viewBox="0 0 20 22"><path d="M6 6V3c0-3 8-3 8 0v3" fill="none" stroke="#eee" /><rect x="1" y="6" width="18" height="15" fill="#f4f4f4" /><rect x="6" y="9" width="3.5" height="3.5" fill="#f25022" /><rect x="10.5" y="9" width="3.5" height="3.5" fill="#7fba00" /><rect x="6" y="13.5" width="3.5" height="3.5" fill="#00a4ef" /><rect x="10.5" y="13.5" width="3.5" height="3.5" fill="#ffb900" /></svg>
      </div>
      <div className="flex w-[46px] justify-center">
        <svg width="22" height="22" viewBox="0 0 22 22"><path d="M11 0l11 8v12H0V8z" fill="#1b9ed8" /><path d="M1 8l10 7 10-7v-1H1z" fill="#e8f6fe" /></svg>
      </div>
      <div className="flex w-[43px] justify-center">
        <svg width="17" height="23" viewBox="0 0 17 23"><path d="M0 0h12l5 5v18H0z" fill="#e8622a" /><path d="M5 16V7h5a2.5 2.5 0 010 6H5" fill="none" stroke="#fff" strokeWidth="1.8" /></svg>
      </div>
      <div className="flex h-full w-[42px] items-center justify-center bg-[#3c5565]">
        <svg width="24" height="24" viewBox="0 0 24 24">
          <circle cx="12" cy="12" r="11" fill="#1038b0" />
          <circle cx="12" cy="12" r="8" fill="#fff" />
          <text x="12" y="14.5" textAnchor="middle" fontSize="6.5" fontWeight="bold" fill="#1038b0" style={axisFont}>MT4</text>
        </svg>
      </div>
      <div className="flex-1" />
      <div className="flex w-[210px] items-center">
        <div className="flex w-[14px] justify-center"><svg width="11" height="7" viewBox="0 0 11 7"><path d="M1 6l4.5-5L10 6" fill="none" stroke="#fff" /></svg></div>
        <div className="flex w-[24px] justify-center"><svg width="15" height="12" viewBox="0 0 15 12"><rect x="2" y="4" width="12" height="7" fill="#ddd" /><rect x="0" y="0" width="6" height="3" fill="#fff" /></svg></div>
        <div className="flex w-[24px] justify-center"><svg width="15" height="13" viewBox="0 0 15 13"><path d="M1 12a11 11 0 0111-11M4 12a8 8 0 018-8M7 12a5 5 0 015-5" fill="none" stroke="#aab" /><circle cx="11" cy="11" r="1.3" fill="#ccc" /></svg></div>
        <div className="flex w-[18px] justify-center"><svg width="13" height="12" viewBox="0 0 13 12"><path d="M0 4h2l4-3v10L2 8H0z" fill="none" stroke="#ddd" /><path d="M8 4l4 4M12 4L8 8" stroke="#ddd" /></svg></div>
        <div className="flex w-[20px] justify-center text-[16px] leading-none">A</div>
        <div className="ml-[1px] flex w-[60px] flex-col items-center pt-[3px] text-[11px] leading-[16px] tracking-[-0.3px]">
          <span>20:15</span>
          <span>2021/06/02</span>
        </div>
        <div className="relative ml-[12px] h-[20px] w-[15px]">
          <svg width="14" height="14" viewBox="0 0 14 14" className="absolute left-0 top-[2px]"><path d="M0 0h14v10h-6l-3 4v-4H0z" fill="#f2f2f2" /><path d="M2 3h10M2 6h10" stroke="#1b3542" /></svg>
          <span className="absolute left-[5px] top-[10px] flex h-[13px] w-[13px] items-center justify-center rounded-full border border-white bg-[#1b3542] text-[9px] leading-none">1</span>
        </div>
      </div>
    </div>
  );
}

export default function App() {
  const menu = [
    ["ファイル (F)", "w-[61px] tracking-[-1.2px]"],
    ["表示 (V)", "w-[53px]"],
    ["挿入(I)", "w-[46px]"],
    ["チャート (C)", "w-[62px] tracking-[-1.5px]"],
    ["ツール (T)", "w-[53px] tracking-[-1.2px]"],
    ["ウィンドウ (W)", "w-[73px] tracking-[-1.4px]"],
    ["ヘルプ (H)", "w-[50px] tracking-[-0.4px]"],
  ];
  return (
    <div className={`relative flex h-[675px] w-[1200px] flex-col overflow-hidden bg-white ${FONT}`}>
      <div className="h-[4px] shrink-0 border-b-[1.5px] border-[#7f99b5] bg-[#dfe9f2]" />
      <div className="flex h-[27px] shrink-0 items-center bg-white pl-[8px] pr-[15px]">
        <svg width="16" height="16" viewBox="0 0 16 16"><circle cx="8" cy="8" r="7.5" fill="#2a3fa8" /><circle cx="8" cy="8" r="4.5" fill="#dfe6f8" /><text x="8" y="10" textAnchor="middle" fontSize="5.5" fontWeight="bold" fill="#2a3fa8" style={axisFont}>MT4</text></svg>
        <span className="ml-[3px] text-[10.5px] tracking-[-0.35px] text-[#333]">81045077: RakutenSecurities-Live - USDJPY,M1</span>
        <div className="flex-1" />
        <svg width="10" height="2" viewBox="0 0 10 2" className="mr-[29px]"><rect width="10" height="1" fill="#222" /></svg>
        <div className="mr-[31px] h-[9px] w-[9px] border border-[#222]" />
        <svg width="10" height="10" viewBox="0 0 10 10"><path d="M0 0l10 10M10 0L0 10" stroke="#222" /></svg>
      </div>
      <div className="flex h-[17px] shrink-0 items-center bg-[#f0f0f0] pl-[8px] pt-[1px] text-[10.5px] text-[#222]">
        {menu.map(([m, cls]) => <span key={m} className={cls}>{m}</span>)}
      </div>
      <div className="flex shrink-0 flex-col border-t border-b-2 border-[#b8b8b8] border-b-[#777] bg-[#f0f0f0]">
        <ToolbarOne />
        <ToolbarTwo />
      </div>
      <div className="flex h-[517px] shrink-0 items-start gap-[2px] bg-[linear-gradient(#9c9c9c,#a6a6a6)]">
        <div className="flex h-[515px] w-[592px] shrink-0 flex-col overflow-hidden rounded-tr-[4px] bg-[#b8d4ee]">
          <ChildTitle active />
          <LeftChart />
        </div>
        <div className="flex h-[510px] w-[606px] shrink-0 flex-col overflow-hidden rounded-tl-[4px] bg-[#cfe0ee]">
          <ChildTitle />
          <div className="pl-[8px]">
            <RightChart />
          </div>
        </div>
      </div>
      <Tabs />
      <StatusBar />
      <Taskbar />
      <Clock />
    </div>
  );
}
